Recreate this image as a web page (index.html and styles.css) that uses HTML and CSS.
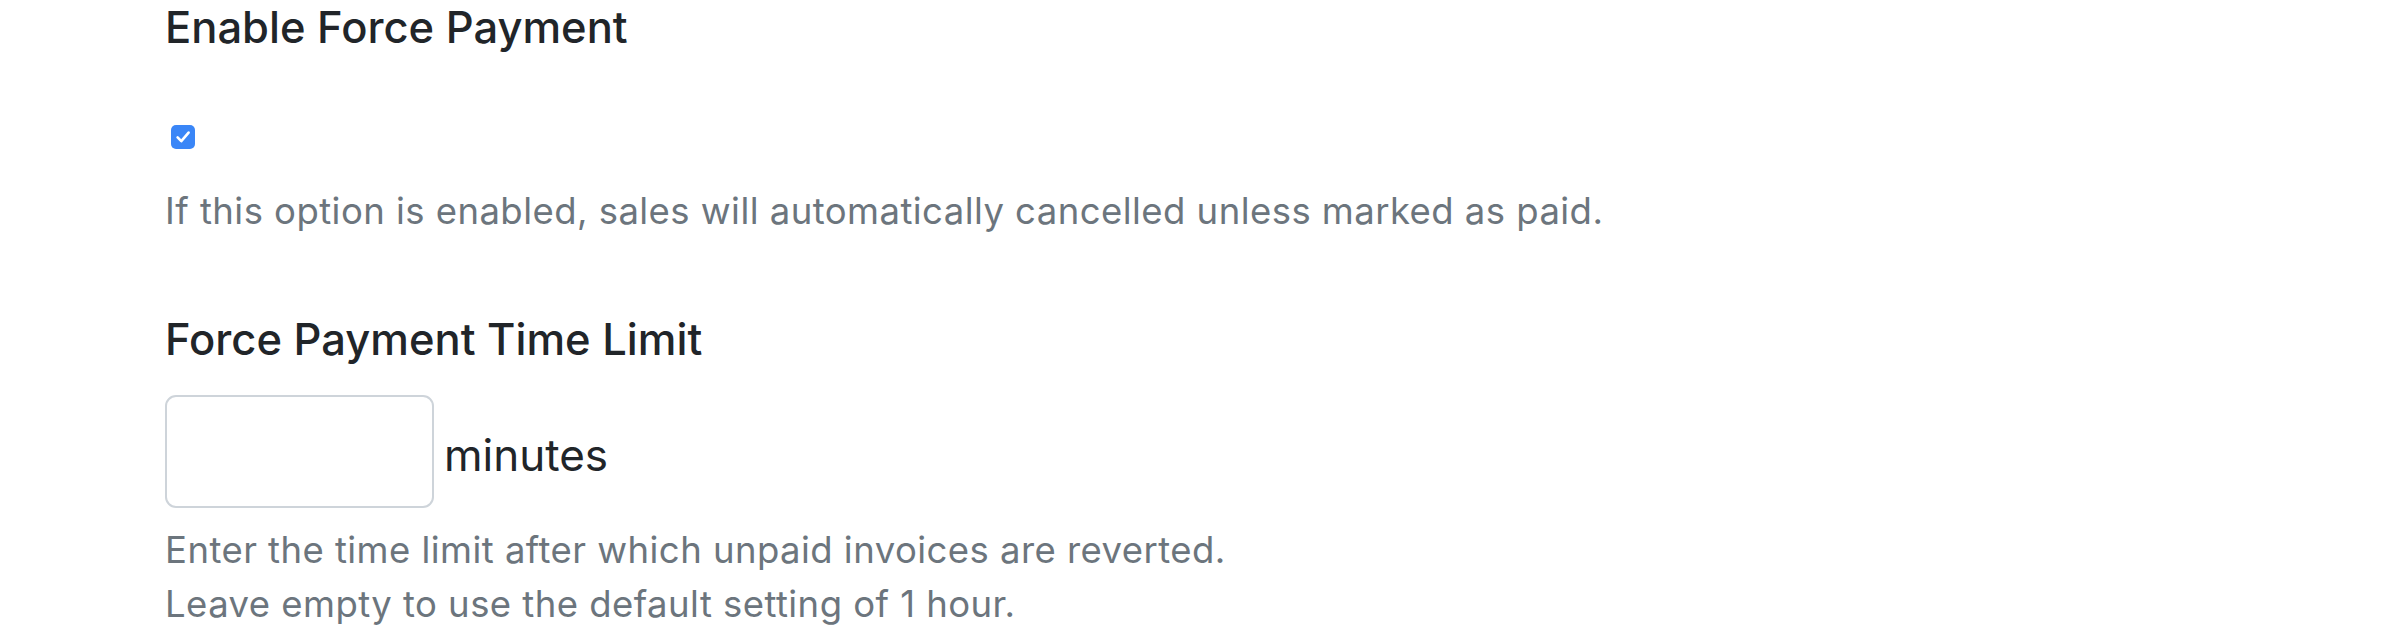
FILE: index.html
```html
<!DOCTYPE html>
<html lang="en">
<head>
<meta charset="utf-8">
<title>Force Payment Settings</title>
<link rel="stylesheet" href="styles.css">
</head>
<body>
<div class="settings">
  <section class="field">
    <h5 class="field-title">Enable Force Payment</h5>
    <div class="check-row">
      <span class="check-box" role="checkbox" aria-checked="true">
        <svg viewBox="0 0 24 24" width="24" height="24" aria-hidden="true"><path d="M6.6 12.4 L10.3 16.2 L17.6 7.6" fill="none" stroke="#ffffff" stroke-width="2.6" stroke-linecap="round" stroke-linejoin="round"/></svg>
      </span>
    </div>
    <p class="help help-single">If this option is enabled, sales will automatically cancelled unless marked as paid.</p>
  </section>
  <section class="field field-second">
    <h5 class="field-title">Force Payment Time Limit</h5>
    <div class="input-row">
      <input class="num-input" type="text" aria-label="Force payment time limit">
      <span class="unit">minutes</span>
    </div>
    <p class="help help-multi">Enter the time limit after which unpaid invoices are reverted.<br>Leave empty to use the default setting of 1 hour.</p>
  </section>
</div>
</body>
</html>
```

FILE: styles.css
```css
html, body {
  margin: 0;
  padding: 0;
  background: #ffffff;
}

body {
  font-family: Inter, "Liberation Sans", sans-serif;
  color: #212529;
}

.settings {
  padding-left: 165px;
  display: flex;
  flex-direction: column;
}

.field {
  display: flex;
  flex-direction: column;
  align-items: flex-start;
}

.field-title {
  margin: 0;
  font-size: 43.5px;
  line-height: 54px;
  font-weight: 500;
  color: #212529;
  letter-spacing: 0;
}

.check-row {
  margin-top: 71px;
  padding-left: 6px;
  display: flex;
}

.check-box {
  width: 24px;
  height: 24px;
  border-radius: 5px;
  background: #3a86f7;
  display: flex;
  align-items: center;
  justify-content: center;
}

.check-box svg {
  display: block;
}

.help {
  margin: 0;
  font-size: 36.5px;
  line-height: 54px;
  letter-spacing: 0.45px;
  color: #6c757d;
}

.help-single {
  margin-top: 35px;
}

.field-second {
  margin-top: 74px;
}

.input-row {
  margin-top: 29px;
  display: flex;
  align-items: center;
  gap: 10px;
}

.num-input {
  box-sizing: border-box;
  width: 269px;
  height: 113px;
  border: 2.5px solid #ced4da;
  border-radius: 11px;
  background: #ffffff;
  margin: 0;
  padding: 0 18px;
  font: inherit;
  font-size: 36px;
  outline: none;
}

.unit {
  font-size: 44px;
  line-height: 54px;
  color: #212529;
  padding-top: 6px;
}

.help-multi {
  margin-top: 15px;
}
```
